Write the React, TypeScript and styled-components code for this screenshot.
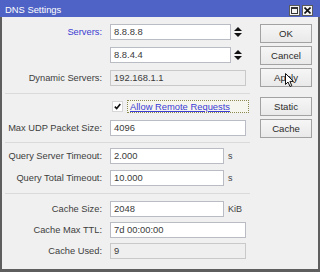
import React from "react";
import styled, { createGlobalStyle } from "styled-components";

const Global = createGlobalStyle`
  html, body { margin: 0; padding: 0; background: #f0f0f0; }
  body { font-family: "Liberation Sans", Arial, sans-serif; }
`;

const Window = styled.div`
  width: 320px;
  height: 272px;
  display: flex;
  flex-direction: column;
  box-sizing: border-box;
  background: #f0f0f0;
  overflow: hidden;
`;

const TitleBar = styled.div`
  height: 17px;
  flex: none;
  display: flex;
  align-items: center;
  background: #4f63c6;
  padding: 0 7px 0 5px;
  box-sizing: border-box;
`;

const TitleText = styled.div`
  flex: 1;
  color: #ffffff;
  font-size: 9.4px;
  padding-top: 2px;
`;

const TitleButtons = styled.div`
  display: flex;
  gap: 2px;
  padding-top: 3px;
`;

const TitleBtn = styled.div`
  width: 11px;
  height: 11px;
  box-sizing: border-box;
  background: #f4f4f4;
  border: 1px solid #5a5a5a;
  display: flex;
  align-items: center;
  justify-content: center;
`;

const Frame = styled.div`
  flex: 1;
  display: flex;
  border: 2px solid #5e5e5e;
  border-top: none;
  border-bottom-width: 3px;
  padding: 7px 6px 0 0;
  box-sizing: border-box;
`;

const Form = styled.div`
  width: 248px;
  display: flex;
  flex-direction: column;
`;

const Section = styled.div<{ $gap: number }>`
  display: flex;
  flex-direction: column;
  gap: ${(p) => p.$gap}px;
`;

const Separator = styled.div<{ $mt: number; $mb: number }>`
  height: 1px;
  background: #dadada;
  margin: ${(p) => p.$mt}px 0 ${(p) => p.$mb}px 3px;
`;

const Row = styled.div<{ $h?: number }>`
  display: grid;
  grid-template-columns: 100px auto 1fr;
  column-gap: 8px;
  align-items: center;
  height: ${(p) => p.$h ?? 16}px;
`;

const Label = styled.div<{ $blue?: boolean }>`
  text-align: right;
  font-size: 9.3px;
  color: ${(p) => (p.$blue ? "#3c3cd2" : "#3d3d3d")};
  white-space: nowrap;
`;

const Field = styled.div<{ $w: number; $ro?: boolean }>`
  width: ${(p) => p.$w}px;
  height: 16px;
  box-sizing: border-box;
  border: 1px solid ${(p) => (p.$ro ? "#c9c9c9" : "#b9bcc2")};
  background: ${(p) => (p.$ro ? "#efefef" : "#ffffff")};
  font-size: 9.4px;
  color: #3a3a3a;
  padding: 0 0 0 3px;
  line-height: 14px;
  white-space: nowrap;
`;

const Suffix = styled.div`
  font-size: 9px;
  color: #444;
  margin-left: -4px;
  display: flex;
  align-items: center;
`;

const CheckWrap = styled.div`
  display: flex;
  align-items: center;
  gap: 4px;
  margin-left: 2px;
`;

const CheckBox = styled.div`
  width: 9px;
  height: 9px;
  background: #ffffff;
  border: 1px solid #d6d6d6;
  display: flex;
  align-items: center;
  justify-content: center;
`;

const LinkBox = styled.div`
  width: 122px;
  height: 13px;
  box-sizing: border-box;
  border: 1px dotted #8a8a50;
  background: #f6f6ee;
  font-size: 9.4px;
  color: #3b3bd6;
  text-decoration: underline;
  padding-left: 2px;
  line-height: 11px;
`;

const ButtonCol = styled.div`
  margin-left: auto;
  width: 52px;
  display: flex;
  flex-direction: column;
`;

const Btn = styled.div<{ $mt?: number }>`
  position: relative;
  height: 19px;
  margin-top: ${(p) => p.$mt ?? 0}px;
  box-sizing: border-box;
  border: 1px solid #a2a2a2;
  background: linear-gradient(#f6f6f6, #e9e9e9);
  font-size: 9.6px;
  color: #2a2a2a;
  display: flex;
  align-items: center;
  justify-content: center;
`;

const Cursor = styled.svg`
  position: absolute;
  left: 24px;
  top: 4px;
`;

const Spinner = () => (
  <svg width="8" height="10" viewBox="0 0 8 10">
    <polygon points="0,4 4,0 8,4" fill="#111" />
    <polygon points="0,6 4,10 8,6" fill="#111" />
  </svg>
);

const SpinWrap = styled.div`
  display: flex;
  align-items: center;
  margin-left: -5px;
`;

export default function App() {
  return (
    <>
      <Global />
      <Window>
        <TitleBar>
          <TitleText>DNS Settings</TitleText>
          <TitleButtons>
            <TitleBtn>
              <svg width="7" height="7" viewBox="0 0 7 7">
                <rect x="0.5" y="0.5" width="6" height="6" fill="none" stroke="#333" />
                <line x1="0" y1="1.5" x2="7" y2="1.5" stroke="#333" />
              </svg>
            </TitleBtn>
            <TitleBtn>
              <svg width="7" height="7" viewBox="0 0 7 7">
                <path d="M0.5 0.5 L6.5 6.5 M6.5 0.5 L0.5 6.5" stroke="#111" strokeWidth="1.6" />
              </svg>
            </TitleBtn>
          </TitleButtons>
        </TitleBar>
        <Frame>
          <Form>
            <Section $gap={7}>
              <Row>
                <Label $blue>Servers:</Label>
                <Field $w={121}>8.8.8.8</Field>
                <SpinWrap><Spinner /></SpinWrap>
              </Row>
              <Row>
                <span />
                <Field $w={121}>8.8.4.4</Field>
                <SpinWrap><Spinner /></SpinWrap>
              </Row>
              <Row>
                <Label>Dynamic Servers:</Label>
                <Field $w={136} $ro>192.168.1.1</Field>
              </Row>
            </Section>
            <Separator $mt={7} $mb={6} />
            <Section $gap={7}>
              <Row $h={13}>
                <span />
                <CheckWrap>
                  <CheckBox>
                    <svg width="7" height="7" viewBox="0 0 7 7">
                      <path d="M0.8 3.6 L2.7 5.6 L6.3 1" stroke="#111" strokeWidth="1.6" fill="none" />
                    </svg>
                  </CheckBox>
                  <LinkBox>Allow Remote Requests</LinkBox>
                </CheckWrap>
              </Row>
              <Row>
                <Label>Max UDP Packet Size:</Label>
                <Field $w={136}>4096</Field>
              </Row>
            </Section>
            <Separator $mt={6} $mb={5} />
            <Section $gap={6}>
              <Row>
                <Label>Query Server Timeout:</Label>
                <Field $w={114}>2.000</Field>
                <Suffix>s</Suffix>
              </Row>
              <Row>
                <Label>Query Total Timeout:</Label>
                <Field $w={114}>10.000</Field>
                <Suffix>s</Suffix>
              </Row>
            </Section>
            <Separator $mt={7} $mb={7} />
            <Section $gap={5}>
              <Row>
                <Label>Cache Size:</Label>
                <Field $w={114}>2048</Field>
                <Suffix>KiB</Suffix>
              </Row>
              <Row>
                <Label>Cache Max TTL:</Label>
                <Field $w={136}>7d 00:00:00</Field>
              </Row>
              <Row>
                <Label>Cache Used:</Label>
                <Field $w={136} $ro>9</Field>
              </Row>
            </Section>
          </Form>
          <ButtonCol>
            <Btn>OK</Btn>
            <Btn $mt={3}>Cancel</Btn>
            <Btn $mt={3}>
              Apply
              <Cursor width="10" height="15" viewBox="0 0 10 15">
                <path d="M0.5 0.5 L0.5 11.5 L3 9 L5 13.5 L6.8 12.7 L4.9 8.4 L8.5 8.4 Z" fill="#fff" stroke="#111" strokeWidth="1" />
              </Cursor>
            </Btn>
            <Btn $mt={10}>Static</Btn>
            <Btn $mt={3}>Cache</Btn>
          </ButtonCol>
        </Frame>
      </Window>
    </>
  );
}
